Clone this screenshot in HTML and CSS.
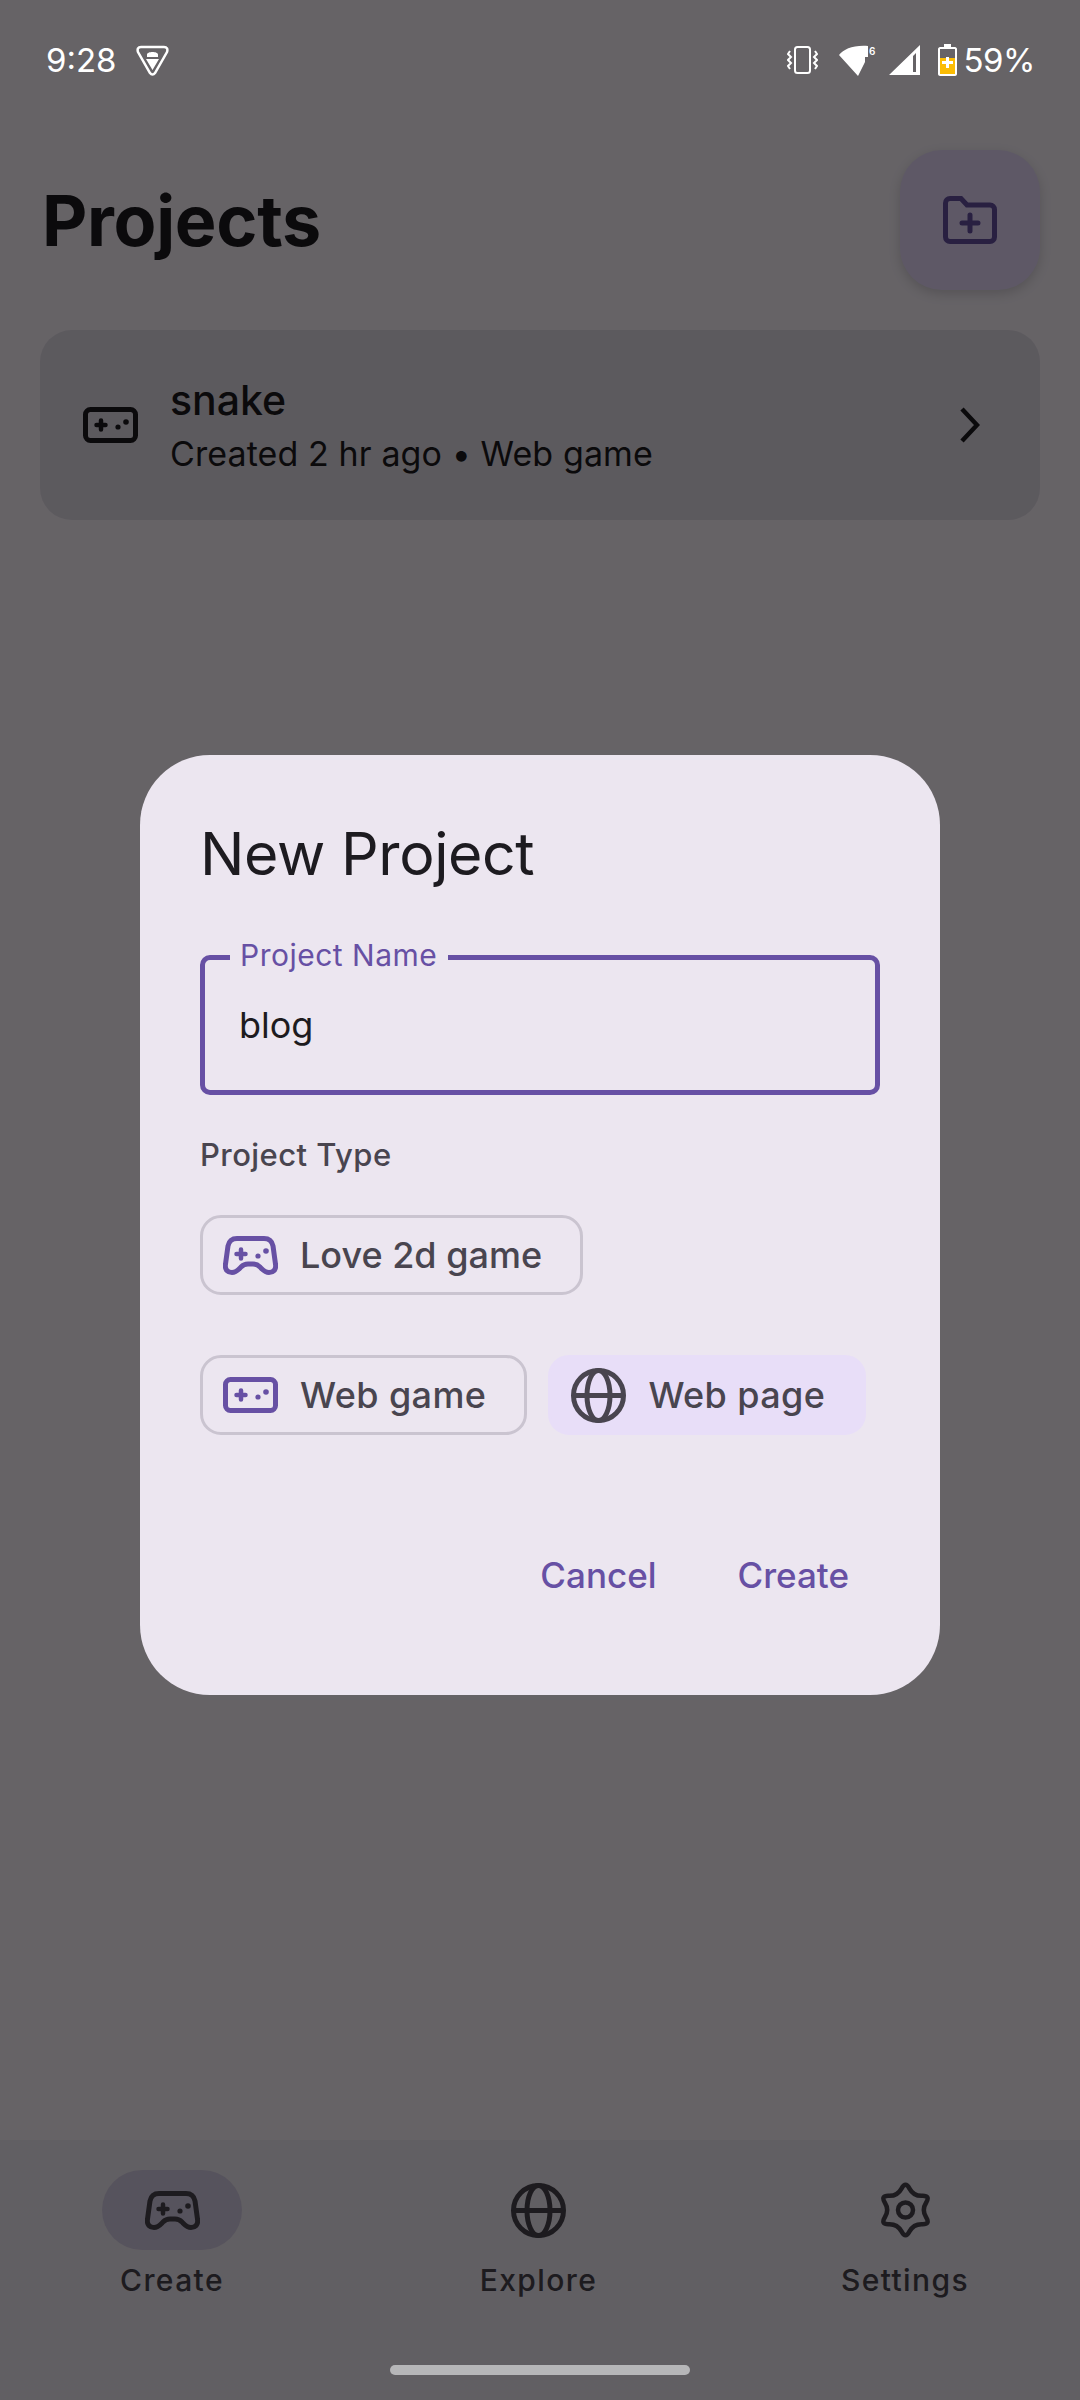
FILE: index.html
```html
<!DOCTYPE html>
<html lang="en">
<head>
    <meta charset="UTF-8">
    <meta name="viewport" content="width=device-width, initial-scale=1.0">
    <title>Projects</title>
    <link rel="stylesheet" href="styles.css">
</head>
<body>
    <svg class="icon-defs" width="0" height="0">
        <symbol id="icon-pad" viewBox="0 0 55 39">
            <path d="M14 2.5H41C46 2.5 49 5 50 10L52.5 28C53.5 34 50 36.5 46 36.5C42 36.5 40 34 37 31C35 29 33 28 30 28H25C22 28 20 29 18 31C15 34 13 36.5 9 36.5C5 36.5 1.500 34 2.500 28L5 10C6 5 9 2.500 14 2.500Z" fill="none" stroke="currentColor" stroke-width="5"/>
            <path d="M13.500 18H22.500M18 13.500V22.500" fill="none" stroke="currentColor" stroke-width="4.500" stroke-linecap="round"/>
            <circle cx="35" cy="20" r="2.600" fill="currentColor"/>
            <circle cx="43" cy="15" r="2.800" fill="currentColor"/>
        </symbol>
        <symbol id="icon-webgame" viewBox="0 0 55 36">
            <rect x="2.500" y="2.500" width="50" height="31" rx="5" fill="none" stroke="currentColor" stroke-width="5"/>
            <path d="M13.500 18H22.500M18 13.500V22.500" fill="none" stroke="currentColor" stroke-width="4.500" stroke-linecap="round"/>
            <circle cx="35" cy="20" r="2.600" fill="currentColor"/>
            <circle cx="43" cy="15" r="2.800" fill="currentColor"/>
        </symbol>
        <symbol id="icon-globe" viewBox="0 0 55 55">
            <g fill="none" stroke="currentColor" stroke-width="5">
                <circle cx="27.500" cy="27.500" r="25"/>
                <ellipse cx="27.500" cy="27.500" rx="11.500" ry="25"/>
                <path d="M2.500 27.500H52.500"/>
            </g>
        </symbol>
    </svg>

    <div class="app">
        <div class="status-bar">
            <div class="status-left">
                <span class="clock">9:28</span>
                <svg class="shield" viewBox="0 0 33 31">
                    <path d="M5 2H28C31 2 32 4 31 7L19 28C17.500 30 15.500 30 14 28L2 7C1 4 2 2 5 2Z" fill="none" stroke="#fff" stroke-width="2.500"/>
                    <path d="M11 9.500C11 6 22 6 22 9.500V12H11ZM10 14H23L16.500 25Z" fill="#fff"/>
                </svg>
            </div>
            <div class="status-right">
                <svg class="st-vibrate" viewBox="0 0 31 28">
                    <rect x="8" y="1" width="15" height="26" rx="2.500" fill="none" stroke="#fff" stroke-width="2"/>
                    <path d="M3 5L1 8L4 11L1 14L4 17L1 20L3 23M28 5L30 8L27 11L30 14L27 17L30 20L28 23" fill="none" stroke="#fff" stroke-width="2"/>
                </svg>
                <svg class="st-wifi" viewBox="0 0 38 31">
                    <path d="M0 10C5 4 14 0 29 1V12H26V17L19 31Z" fill="#fff"/>
                    <text class="st-six" x="30" y="10">6</text>
                </svg>
                <svg class="st-signal" viewBox="0 0 31 30">
                    <path d="M0 30L31 0V30ZM24 11V27H27V8Z" fill="#fff" fill-rule="evenodd"/>
                </svg>
                <svg class="st-battery" viewBox="0 0 19 32">
                    <path d="M6 0H13V3H17C18 3 19 4 19 5V30C19 31 18 32 17 32H2C1 32 0 31 0 30V5C0 4 1 3 2 3H6Z" fill="#fff"/>
                    <rect x="2" y="5" width="15" height="11" fill="#666367"/>
                    <rect x="2" y="14" width="15" height="16" fill="#fbbc04"/>
                    <path d="M8 13H11V17H15V20H11V24H8V20H4V17H8Z" fill="#fff"/>
                </svg>
                <span class="battery-text">59%</span>
            </div>
        </div>

        <div class="header">
            <h1 class="page-title">Projects</h1>
            <div class="fab">
                <svg class="fab-icon" viewBox="0 0 54 48">
                    <path d="M7 2.500H18L24 9H47C49.500 9 51.500 11 51.500 13.500V41C51.500 43.500 49.500 45.500 47 45.500H7C4.500 45.500 2.500 43.500 2.500 41V7C2.500 4.500 4.500 2.500 7 2.500Z" fill="none" stroke="currentColor" stroke-width="5"/>
                    <path d="M27 19V35M19 27H35" fill="none" stroke="currentColor" stroke-width="5" stroke-linecap="round"/>
                </svg>
            </div>
        </div>

        <div class="project-card">
            <svg class="card-icon"><use href="#icon-webgame"/></svg>
            <div class="card-text">
                <div class="card-name">snake</div>
                <div class="card-meta">Created 2 hr ago • Web game</div>
            </div>
            <svg class="chevron" viewBox="0 0 21 36">
                <path d="M3 2L18 18L3 34" fill="none" stroke="currentColor" stroke-width="4.500"/>
            </svg>
        </div>

        <div class="nav">
            <div class="nav-items">
                <div class="nav-item">
                    <div class="nav-pill active">
                        <svg class="nav-pad"><use href="#icon-pad"/></svg>
                    </div>
                    <span class="nav-label">Create</span>
                </div>
                <div class="nav-item">
                    <div class="nav-pill">
                        <svg class="nav-globe"><use href="#icon-globe"/></svg>
                    </div>
                    <span class="nav-label">Explore</span>
                </div>
                <div class="nav-item">
                    <div class="nav-pill">
                        <svg class="nav-gear" viewBox="0 0 49 56">
                            <g transform="translate(24.500 28)" fill="none" stroke="currentColor" stroke-width="4.500">
                                <path d="M-4 -21.400Q0 -29 4 -21.400Q8 -13.900 16.600 -14.200Q25.100 -14.500 20.600 -7.200Q16 0 20.600 7.200Q25.100 14.500 16.600 14.200Q8 13.900 4 21.400Q0 29 -4 21.400Q-8 13.900 -16.600 14.200Q-25.100 14.500 -20.600 7.200Q-16 0 -20.600 -7.200Q-25.100 -14.500 -16.600 -14.200Q-8 -13.900 -4 -21.400Z"/>
                                <circle r="7.500"/>
                            </g>
                        </svg>
                    </div>
                    <span class="nav-label">Settings</span>
                </div>
            </div>
        </div>
    </div>

    <div class="scrim">
        <div class="dialog">
            <h2 class="dialog-title">New Project</h2>

            <div class="field">
                <label class="field-label" for="projectName">Project Name</label>
                <input class="field-input" id="projectName" type="text" value="blog">
            </div>

            <div class="type-label">Project Type</div>

            <div class="chips">
                <div class="chip">
                    <svg class="chip-icon pad"><use href="#icon-pad"/></svg>
                    <span>Love 2d game</span>
                </div>
                <div class="chip web">
                    <svg class="chip-icon webgame"><use href="#icon-webgame"/></svg>
                    <span>Web game</span>
                </div>
                <div class="chip web selected">
                    <svg class="chip-icon globe"><use href="#icon-globe"/></svg>
                    <span>Web page</span>
                </div>
            </div>

            <div class="dialog-actions">
                <button class="text-btn">Cancel</button>
                <button class="text-btn">Create</button>
            </div>
        </div>
    </div>

    <div class="home-handle"></div>
</body>
</html>
```

FILE: styles.css
```css
* {
    box-sizing: border-box;
}

body {
    margin: 0;
    width: 1080px;
    height: 2400px;
    position: relative;
    overflow: hidden;
    font-family: Inter, "Noto Sans", sans-serif;
    background-color: #fef7ff;
    color: #1d1b20;
}

h1, h2 {
    margin: 0;
}

.icon-defs {
    position: absolute;
}

.app {
    display: flex;
    flex-direction: column;
    height: 2400px;
}

/* status bar sits above the scrim */
.status-bar {
    position: relative;
    z-index: 3;
    height: 150px;
    padding: 0 45px 0 46px;
    display: flex;
    justify-content: space-between;
    align-items: flex-start;
    color: #fff;
}

.status-left, .status-right {
    display: flex;
    align-items: center;
    height: 32px;
    margin-top: 44px;
}

.clock {
    font-size: 33px;
    width: 90px;
}

.shield {
    width: 33px;
    height: 31px;
}

.st-vibrate {
    width: 31px;
    height: 28px;
}

.st-wifi {
    width: 38px;
    height: 31px;
    margin-left: 21px;
    overflow: visible;
}

.st-six {
    font-size: 10px;
    font-weight: 600;
    fill: #fff;
}

.st-signal {
    width: 31px;
    height: 30px;
    margin-left: 12px;
}

.st-battery {
    width: 19px;
    height: 32px;
    margin-left: 18px;
}

.battery-text {
    font-size: 33px;
    margin-left: 7px;
    letter-spacing: -0.5px;
}

.header {
    display: flex;
    justify-content: space-between;
    align-items: center;
    padding: 0 40px 0 42px;
}

.page-title {
    font-size: 70px;
    font-weight: 700;
    letter-spacing: -0.3px;
}

.fab {
    width: 140px;
    height: 140px;
    border-radius: 42px;
    background-color: #eaddff;
    color: #6750a4;
    display: flex;
    justify-content: center;
    align-items: center;
    box-shadow: 0 4px 12px rgba(0, 0, 0, 0.16);
}

.fab-icon {
    width: 54px;
    height: 48px;
}

.project-card {
    margin: 40px 40px 0;
    height: 190px;
    border-radius: 32px;
    background-color: #e7e0ec;
    display: flex;
    align-items: center;
    padding: 0 60px 0 43px;
}

.card-icon {
    width: 55px;
    height: 36px;
}

.card-text {
    flex: 1;
    margin-left: 32px;
    padding-top: 4px;
}

.card-name {
    font-size: 41px;
    font-weight: 500;
    line-height: 54px;
}

.card-meta {
    font-size: 34px;
    line-height: 54px;
    letter-spacing: 0.1px;
}

.chevron {
    width: 21px;
    height: 36px;
}

.nav {
    margin-top: auto;
    height: 260px;
    background-color: #f3edf7;
    padding: 30px 105px 0 102px;
}

.nav-items {
    display: flex;
    justify-content: space-between;
}

.nav-item {
    width: 140px;
    display: flex;
    flex-direction: column;
    align-items: center;
    color: #49454f;
}

.nav-pill {
    width: 140px;
    height: 80px;
    border-radius: 40px;
    display: flex;
    justify-content: center;
    align-items: center;
}

.nav-pill.active {
    background-color: #d8d0e8;
}

.nav-pad {
    width: 55px;
    height: 39px;
}

.nav-globe {
    width: 55px;
    height: 55px;
}

.nav-gear {
    width: 49px;
    height: 56px;
}

.nav-label {
    margin-top: 10px;
    font-size: 30px;
    line-height: 40px;
    font-weight: 500;
    letter-spacing: 1.4px;
    white-space: nowrap;
}

.scrim {
    position: absolute;
    inset: 0;
    z-index: 2;
    padding-top: 50px;
    background-color: rgba(0, 0, 0, 0.6);
    display: flex;
    justify-content: center;
    align-items: center;
}

.dialog {
    width: 800px;
    height: 940px;
    border-radius: 70px;
    background-color: #ece6f0;
    padding: 60px 60px 0;
    display: flex;
    flex-direction: column;
}

.dialog-title {
    font-size: 59px;
    font-weight: 400;
    line-height: 78px;
    letter-spacing: -0.4px;
}

.field {
    position: relative;
    margin-top: 62px;
    height: 140px;
    border: 5px solid #6750a4;
    border-radius: 10px;
}

.field-label {
    position: absolute;
    left: 25px;
    top: -23px;
    padding: 0 11px 0 10px;
    background-color: #ece6f0;
    color: #6750a4;
    font-size: 30px;
    line-height: 36px;
    letter-spacing: 0.5px;
}

.field-input {
    width: 100%;
    height: 100%;
    padding: 0 34px;
    border: none;
    outline: none;
    background: none;
    font-family: inherit;
    font-size: 36px;
    color: #1d1b20;
}

.type-label {
    margin-top: 40px;
    font-size: 31px;
    line-height: 40px;
    font-weight: 500;
    letter-spacing: 0.45px;
    color: #49454f;
}

.chips {
    margin-top: 40px;
    display: flex;
    flex-wrap: wrap;
    column-gap: 21px;
    row-gap: 60px;
}

.chip {
    height: 80px;
    border: 3px solid #cac4d0;
    border-radius: 21px;
    padding: 0 38px 0 20px;
    display: flex;
    align-items: center;
    gap: 22px;
    font-size: 36px;
    font-weight: 500;
    color: #49454f;
    white-space: nowrap;
}

.chip.web {
    letter-spacing: 0.4px;
}

.chip:first-child {
    margin-right: 200px;
}

.chip.selected {
    border-color: #e8def8;
    background-color: #e8def8;
}

.chip-icon {
    color: #6750a4;
    flex: none;
}

.chip-icon.pad {
    width: 55px;
    height: 39px;
}

.chip-icon.webgame {
    width: 55px;
    height: 36px;
}

.chip-icon.globe {
    width: 55px;
    height: 55px;
    color: #49454f;
}

.dialog-actions {
    margin-top: 119px;
    display: flex;
    justify-content: flex-end;
    gap: 81px;
    padding-right: 31px;
}

.text-btn {
    padding: 0;
    border: none;
    background: none;
    font-family: inherit;
    font-size: 35px;
    font-weight: 500;
    color: #6750a4;
}

.home-handle {
    position: absolute;
    left: 390px;
    bottom: 25px;
    z-index: 3;
    width: 300px;
    height: 10px;
    border-radius: 5px;
    background-color: #b6b6b8;
}
```
